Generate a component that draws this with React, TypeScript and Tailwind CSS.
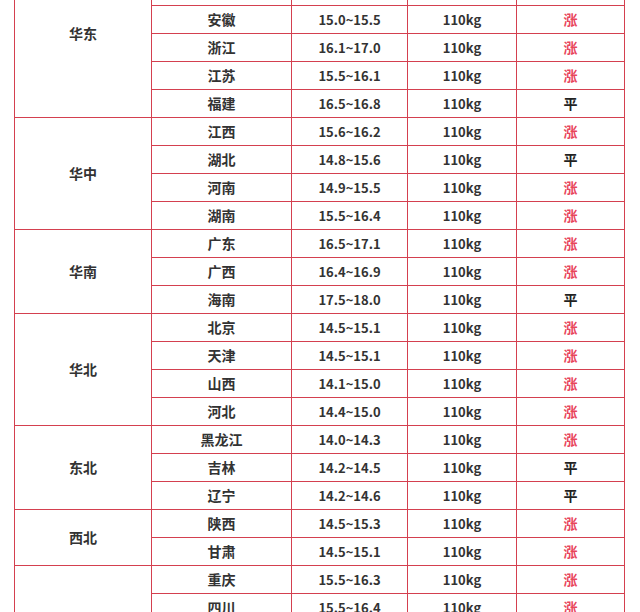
type Row = { province: string; price: string; trend: '涨' | '平' };
type Group = { region: string; rows: Row[] };

const groups: Group[] = [
  {
    region: '华东',
    rows: [
      { province: '上海', price: '15.6~16.2', trend: '涨' },
      { province: '山东', price: '15.0~15.6', trend: '涨' },
      { province: '安徽', price: '15.0~15.5', trend: '涨' },
      { province: '浙江', price: '16.1~17.0', trend: '涨' },
      { province: '江苏', price: '15.5~16.1', trend: '涨' },
      { province: '福建', price: '16.5~16.8', trend: '平' },
    ],
  },
  {
    region: '华中',
    rows: [
      { province: '江西', price: '15.6~16.2', trend: '涨' },
      { province: '湖北', price: '14.8~15.6', trend: '平' },
      { province: '河南', price: '14.9~15.5', trend: '涨' },
      { province: '湖南', price: '15.5~16.4', trend: '涨' },
    ],
  },
  {
    region: '华南',
    rows: [
      { province: '广东', price: '16.5~17.1', trend: '涨' },
      { province: '广西', price: '16.4~16.9', trend: '涨' },
      { province: '海南', price: '17.5~18.0', trend: '平' },
    ],
  },
  {
    region: '华北',
    rows: [
      { province: '北京', price: '14.5~15.1', trend: '涨' },
      { province: '天津', price: '14.5~15.1', trend: '涨' },
      { province: '山西', price: '14.1~15.0', trend: '涨' },
      { province: '河北', price: '14.4~15.0', trend: '涨' },
    ],
  },
  {
    region: '东北',
    rows: [
      { province: '黑龙江', price: '14.0~14.3', trend: '涨' },
      { province: '吉林', price: '14.2~14.5', trend: '平' },
      { province: '辽宁', price: '14.2~14.6', trend: '平' },
    ],
  },
  {
    region: '西北',
    rows: [
      { province: '陕西', price: '14.5~15.3', trend: '涨' },
      { province: '甘肃', price: '14.5~15.1', trend: '涨' },
    ],
  },
  {
    region: '西南',
    rows: [
      { province: '重庆', price: '15.5~16.3', trend: '涨' },
      { province: '四川', price: '15.5~16.4', trend: '涨' },
      { province: '贵州', price: '15.8~16.5', trend: '涨' },
      { province: '云南', price: '15.6~16.2', trend: '涨' },
    ],
  },
];

const cell = 'border border-[#d4404f] text-center align-middle p-0';

export default function App() {
  return (
    <div
      className="h-[612px] w-[640px] overflow-hidden bg-white"
      style={{ fontFamily: '"Noto Sans CJK SC", "Noto Sans", sans-serif' }}
    >
      <table className="ml-[14px] -mt-[51px] border-collapse table-fixed w-[610px] text-[14px] font-bold text-[#333]">
        <colgroup>
          <col className="w-[137px]" />
          <col className="w-[140px]" />
          <col className="w-[116px]" />
          <col className="w-[109px]" />
          <col className="w-[108px]" />
        </colgroup>
        <tbody>
          {groups.map((g) =>
            g.rows.map((r, i) => (
              <tr key={g.region + r.province} className="h-[28px]">
                {i === 0 && (
                  <td rowSpan={g.rows.length} className={cell}>
                    {g.region}
                  </td>
                )}
                <td className={cell}>{r.province}</td>
                <td className={`${cell} text-[13px]`}>{r.price}</td>
                <td className={`${cell} text-[13px]`}>110kg</td>
                <td className={`${cell} ${r.trend === '涨' ? 'text-[#e8455c]' : 'text-[#222]'}`}>
                  {r.trend}
                </td>
              </tr>
            ))
          )}
        </tbody>
      </table>
    </div>
  );
}
